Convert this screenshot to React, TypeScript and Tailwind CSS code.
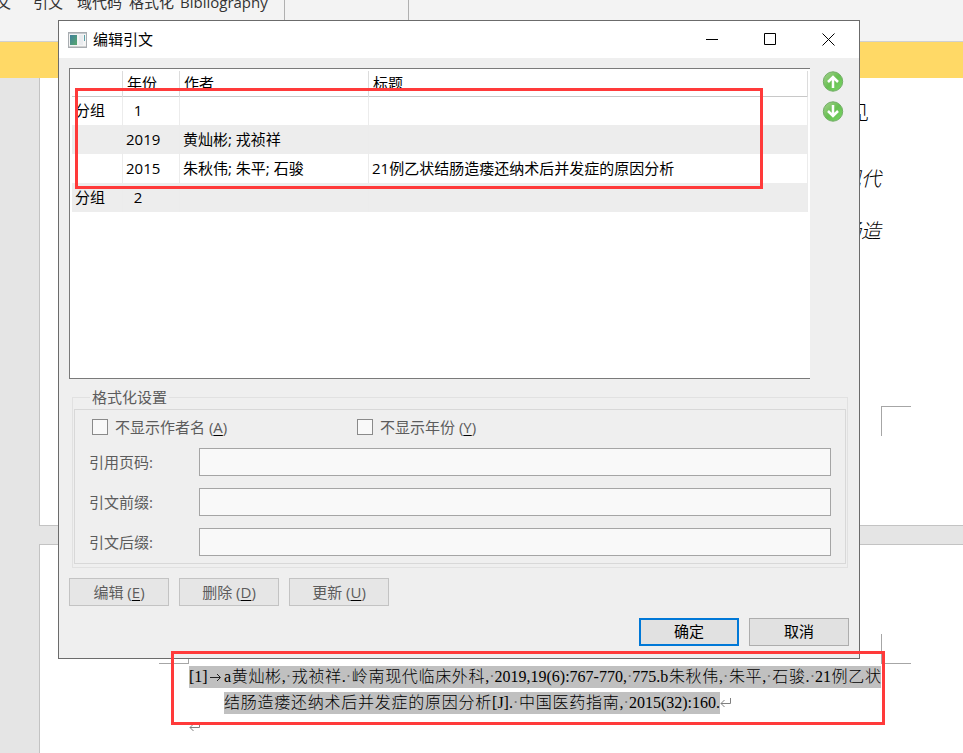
import React from 'react';

const rows = [
  { group: '分组', year: '\u00a0\u00a01', authors: '', title: '' },
  { group: '', year: '2019', authors: '黄灿彬; 戎祯祥', title: '' },
  { group: '', year: '2015', authors: '朱秋伟; 朱平; 石骏', title: '21例乙状结肠造瘘还纳术后并发症的原因分析' },
  { group: '分组', year: '\u00a0\u00a02', authors: '', title: '' },
];

const fields = [
  { id: 'pages', label: '引用页码:' },
  { id: 'prefix', label: '引文前缀:' },
  { id: 'suffix', label: '引文后缀:' },
];

const actions = [
  { label: '编辑', mnemonic: 'E' },
  { label: '删除', mnemonic: 'D' },
  { label: '更新', mnemonic: 'U' },
];

const Mnemonic = ({ letter }: { letter: string }) => (
  <span>
    (<u className="decoration-black decoration-1 underline-offset-2">{letter}</u>)
  </span>
);

// Visible space mark of the word processor
const Dot = () => <span className="text-[#707070]">·</span>;

const ReturnMark = () => (
  <svg width="12" height="10" viewBox="0 0 12 10" fill="none" stroke="#808080" className="shrink-0">
    <path d="M10.5 0v5.5H1M4.5 2L1 5.5L4.5 9" />
  </svg>
);

const AppIcon = () => (
  <svg width="19" height="16" viewBox="0 0 19 16">
    <defs>
      <linearGradient id="appFill" x1="0" y1="0" x2="1" y2="1">
        <stop offset="0" stopColor="#3f7f9c" />
        <stop offset="1" stopColor="#58a86c" />
      </linearGradient>
    </defs>
    <rect x="0.5" y="0.5" width="18" height="15" fill="#f4f4f4" stroke="#a9adb1" />
    <path d="M1 1.5h17" stroke="#c3c8cd" />
    <rect x="2" y="3" width="7" height="10" fill="url(#appFill)" />
    <rect x="11" y="3" width="4" height="10" fill="#e9ebee" />
    <path d="M16.5 3v6" stroke="#5ba0a8" />
    <path d="M1 14.5h17" stroke="#d0d0d0" />
  </svg>
);

const MoveIcon = ({ down = false }: { down?: boolean }) => (
  <svg width="22" height="21" viewBox="0 0 22 21">
    <defs>
      <linearGradient id={down ? 'greenDown' : 'greenUp'} x1="0" y1="0" x2="1" y2="1">
        <stop offset="0" stopColor="#a9d392" />
        <stop offset="0.5" stopColor="#68bf52" />
        <stop offset="1" stopColor="#78d866" />
      </linearGradient>
    </defs>
    <circle cx="11" cy="10.5" r="9.700" fill={down ? 'url(#greenDown)' : 'url(#greenUp)'} stroke="#72ad66" />
    <path
      d={down ? 'M11 4v11M6 10l5 5l5-5' : 'M11 17V6M6 11l5-5l5 5'}
      fill="none"
      stroke="#fff"
      strokeWidth="2.5"
    />
  </svg>
);

const Document = () => (
  <div className="h-full flex flex-col">
    <header className="h-[42px] shrink-0 bg-[#f3f3f3] border-b border-[#d0d0d0] flex items-start">
      <nav className="h-5 -mt-2 -ml-1 w-[288px] shrink-0 flex leading-5 text-[#333] whitespace-nowrap">
        <span className="w-[37px]">文</span>
        <span className="w-11">引文</span>
        <span className="w-[52px]">域代码</span>
        <span className="w-[51px]">格式化</span>
        <span>Bibliography</span>
      </nav>
      <div className="w-[125px] h-full border-x border-[#b0b0b0]" />
    </header>
    <div className="h-9 shrink-0 bg-[#ffd966]" />
    <main className="flex-1 min-h-0 bg-[#e5e5e5] pl-[39px] flex flex-col gap-[18px] font-light text-black">
      <section className="relative h-[448px] shrink-0 bg-white border-l border-b border-[#c3c3c3] pr-[82px] pt-[22px] text-right text-[20px] leading-[26px]">
        <p className="pr-3">见</p>
        <p className="pt-10 italic">现代</p>
        <p className="pt-[26px] italic">肠造</p>
        <div className="absolute right-[52px] top-[328px] size-[30px] border-l border-t border-[#a6a6a6]" />
      </section>
      <section className="relative flex-1 bg-white border-l border-t border-[#c3c3c3] pl-[149px] pr-[82px] pt-[121px] font-['Liberation_Serif','Noto_Sans_CJK_SC',serif] text-base leading-[22px] whitespace-nowrap">
        <div className="absolute left-[119px] top-[89px] size-[30px] border-r border-b border-[#a6a6a6]" />
        <div className="absolute right-[52px] top-[89px] size-[30px] border-l border-b border-[#a6a6a6]" />
        <div className="flex h-[22px] bg-[#c0c0c0]">
          <span className="w-[35px] shrink-0 flex items-center gap-[2px]">
            [1]
            <svg width="12" height="10" viewBox="0 0 12 10" fill="none" stroke="#222">
              <path d="M0 5.5h10M7 2l3.500 3.500L7 9" />
            </svg>
          </span>
          <p className="flex-1 text-justify [text-align-last:justify]">
            a黄灿彬,<Dot />戎祯祥.<Dot />岭南现代临床外科,<Dot />2019,19(6):767-770,<Dot />775.b朱秋伟,<Dot />朱平,<Dot />石骏.<Dot />21例乙状
          </p>
        </div>
        <div className="mt-1 pl-[35px] flex items-center">
          <p className="h-[22px] w-[496px] bg-[#c0c0c0] text-justify [text-align-last:justify]">
            结肠造瘘还纳术后并发症的原因分析[J].<Dot />中国医药指南,<Dot />2015(32):160.
          </p>
          <ReturnMark />
        </div>
        <div className="mt-2">
          <ReturnMark />
        </div>
      </section>
    </main>
  </div>
);

const EntryTable = () => (
  <div className="flex-1 h-[311px] bg-white border-l border-y border-[#7a7a7a] p-[2px] text-black">
    <table className="w-full table-fixed border-separate border-spacing-0 text-left whitespace-nowrap">
      <colgroup>
        <col className="w-[51px]" />
        <col className="w-[57px]" />
        <col className="w-[189px]" />
        <col />
      </colgroup>
      <thead>
        <tr className="h-[25px] leading-5">
          <th className="p-0 border-r border-[#dcdcdc]"><span className="sr-only">分组</span></th>
          <th className="p-0 pl-1 pb-[2px] font-normal border-r border-[#dcdcdc]">年份</th>
          <th className="p-0 pl-1 pb-[2px] font-normal border-r border-[#dcdcdc]">作者</th>
          <th className="p-0 pl-1 pb-[2px] font-normal border-r border-[#dcdcdc]">标题</th>
        </tr>
      </thead>
      <tbody className="[&>tr:first-child>td]:border-t [&>tr:first-child>td]:border-t-[#c8c8c8]">
        {rows.map((row, i) => (
          <tr key={i} className="h-[29px] leading-5 even:bg-[#ededed]">
            <td className="p-0 pl-[3px] pb-[2px] border-r border-[#ececec]">{row.group}</td>
            <td className="p-0 pl-[3px] pb-[2px] border-r border-[#ececec]">{row.year}</td>
            <td className="p-0 pl-[3px] pb-[2px] border-r border-[#ececec]">{row.authors}</td>
            <td className="p-0 pl-[3px] pb-[2px] border-r border-[#ececec]">{row.title}</td>
          </tr>
        ))}
      </tbody>
    </table>
  </div>
);

const CitationDialog = () => (
  <div
    role="dialog"
    aria-labelledby="dialog-title"
    className="absolute left-[58px] right-[103px] top-5 border border-[#6b6b6b] bg-[#efefef] text-[#5c5c5c]"
  >
    <div className="h-[37px] bg-white text-black flex items-center pl-[9px] pr-[2px]">
      <AppIcon />
      <h1 id="dialog-title" className="ml-[6px] pb-[2px] flex-1">编辑引文</h1>
      <button aria-label="最小化" className="w-[58px] h-full flex items-center justify-center">
        <svg width="13" height="13" viewBox="0 0 13 13" stroke="#000"><path d="M0 6.500h12" /></svg>
      </button>
      <button aria-label="最大化" className="w-[58px] h-full flex items-center justify-center">
        <svg width="13" height="13" viewBox="0 0 13 13" fill="none" stroke="#000"><path d="M0.500 0.500h11v11h-11z" /></svg>
      </button>
      <button aria-label="关闭" className="w-[58px] h-full flex items-center justify-center">
        <svg width="13" height="13" viewBox="0 0 13 13" stroke="#000"><path d="M0.500 0.500l12 12M12.500 0.500l-12 12" /></svg>
      </button>
    </div>

    <div className="pt-[10px] pb-3 px-[10px]">
      <div className="flex">
        <EntryTable />
        <div className="pl-3 pr-[5px] pt-[3px] flex flex-col gap-[9px]">
          <button aria-label="上移"><MoveIcon /></button>
          <button aria-label="下移"><MoveIcon down /></button>
        </div>
      </div>

      <fieldset className="mt-2 ml-[3px] mr-px border border-[#e1e1e1] px-px pt-[2px] pb-[3px]">
        <legend className="ml-4 px-[2px] leading-5">格式化设置</legend>
        <div className="border border-[#d8d8d8] pb-[7px]">
          <div className="h-[38px] pb-[5px] pl-[17px] flex items-center">
            <label className="w-[265px] flex items-center gap-[7px]">
              <input type="checkbox" className="appearance-none size-4 border border-[#8a8a8a] bg-[#f9f9f9]" />
              <span>不显示作者名 <Mnemonic letter="A" /></span>
            </label>
            <label className="flex items-center gap-[7px]">
              <input type="checkbox" className="appearance-none size-4 border border-[#8a8a8a] bg-[#f9f9f9]" />
              <span>不显示年份 <Mnemonic letter="Y" /></span>
            </label>
          </div>
          <div className="px-[14px] flex flex-col gap-3">
            {fields.map((field) => (
              <div key={field.id} className="flex items-center">
                <label htmlFor={field.id} className="w-[110px]">{field.label}</label>
                <input id={field.id} type="text" className="flex-1 h-7 px-1 border border-[#a5a5a5] bg-[#f9f9f9]" />
              </div>
            ))}
          </div>
        </div>
      </fieldset>

      <div className="mt-[10px] flex gap-[10px]">
        {actions.map((action) => (
          <button key={action.mnemonic} className="w-[100px] h-7 pb-px border border-[#c3c3c3] bg-[#e6e6e6]">
            {action.label} <Mnemonic letter={action.mnemonic} />
          </button>
        ))}
      </div>
      <div className="mt-3 flex justify-end gap-[10px] text-black">
        <button className="w-[100px] h-7 pb-[2px] border-2 border-[#0078d7] bg-[#e1e1e1]">确定</button>
        <button className="w-[100px] h-7 pb-[2px] border border-[#adadad] bg-[#e1e1e1]">取消</button>
      </div>
    </div>
  </div>
);

const App = () => {
  return (
    <div className="relative h-screen overflow-hidden bg-white font-['Open_Sans','Noto_Sans_CJK_SC',sans-serif] text-[15px] leading-5">
      <Document />
      <CitationDialog />
      {/* red highlight frames */}
      <div className="absolute left-[75px] right-[200px] top-[88px] h-[101px] border-3 border-[#ff3a3a] pointer-events-none" />
      <div className="absolute left-[171px] right-[78px] top-[651px] h-[74px] border-3 border-[#ff3a3a] pointer-events-none" />
    </div>
  );
};

export default App;
